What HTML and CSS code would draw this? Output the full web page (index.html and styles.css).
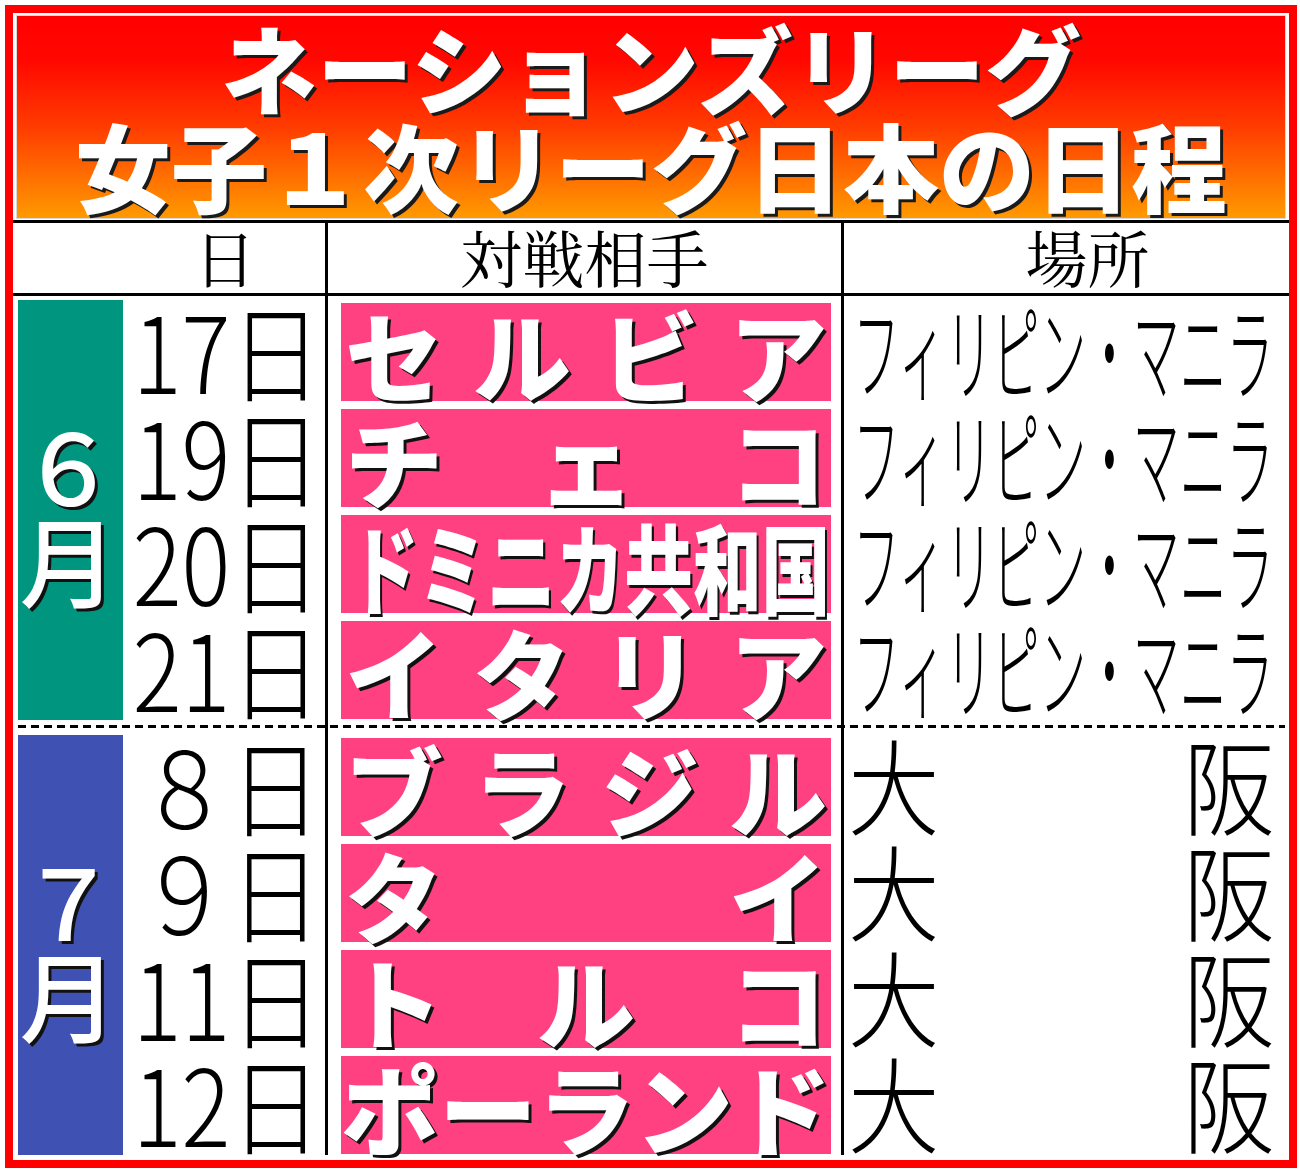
FILE: index.html
```html
<!DOCTYPE html>
<html lang="ja">
<head>
<meta charset="utf-8">
<title>ネーションズリーグ 女子１次リーグ日本の日程</title>
<link rel="stylesheet" href="styles.css">
</head>
<body>
<div class="frame">
  <div class="title">
    <div class="title-line">ネーションズリーグ</div>
    <div class="title-line">女子１次リーグ日本の日程</div>
  </div>
  <div class="table">
    <div class="vlines"></div>
    <div class="th th-day">日</div>
    <div class="th th-opp">対戦相手</div>
    <div class="th th-venue">場所</div>

    <div class="month month-jun"><span>６</span><span>月</span></div>

    <div class="row r2">
      <div class="date"><span class="tall">17日</span></div>
      <div class="opp"><div class="box"><span>セ</span><span>ル</span><span>ビ</span><span>ア</span></div></div>
      <div class="venue"><span class="condensed">フィリピン・マニラ</span></div>
    </div>
    <div class="row r3">
      <div class="date"><span class="tall">19日</span></div>
      <div class="opp"><div class="box"><span>チ</span><span>ェ</span><span>コ</span></div></div>
      <div class="venue"><span class="condensed">フィリピン・マニラ</span></div>
    </div>
    <div class="row r4">
      <div class="date"><span class="tall">20日</span></div>
      <div class="opp"><div class="box box-center"><span class="squeeze">ドミニカ共和国</span></div></div>
      <div class="venue"><span class="condensed">フィリピン・マニラ</span></div>
    </div>
    <div class="row r5">
      <div class="date"><span class="tall">21日</span></div>
      <div class="opp"><div class="box"><span>イ</span><span>タ</span><span>リ</span><span>ア</span></div></div>
      <div class="venue"><span class="condensed">フィリピン・マニラ</span></div>
    </div>

    <div class="divider"><div class="dash"></div></div>

    <div class="month month-jul"><span>７</span><span>月</span></div>

    <div class="row r7">
      <div class="date"><span class="tall">８日</span></div>
      <div class="opp"><div class="box"><span>ブ</span><span>ラ</span><span>ジ</span><span>ル</span></div></div>
      <div class="venue venue-split"><span class="tall-l">大</span><span class="tall-r">阪</span></div>
    </div>
    <div class="row r8">
      <div class="date"><span class="tall">９日</span></div>
      <div class="opp"><div class="box"><span>タ</span><span>イ</span></div></div>
      <div class="venue venue-split"><span class="tall-l">大</span><span class="tall-r">阪</span></div>
    </div>
    <div class="row r9">
      <div class="date"><span class="tall">11日</span></div>
      <div class="opp"><div class="box"><span>ト</span><span>ル</span><span>コ</span></div></div>
      <div class="venue venue-split"><span class="tall-l">大</span><span class="tall-r">阪</span></div>
    </div>
    <div class="row r10">
      <div class="date"><span class="tall">12日</span></div>
      <div class="opp"><div class="box box-tight"><span>ポ</span><span>ー</span><span>ラ</span><span>ン</span><span>ド</span></div></div>
      <div class="venue venue-split"><span class="tall-l">大</span><span class="tall-r">阪</span></div>
    </div>
  </div>
</div>
</body>
</html>
```
FILE: styles.css
```css
* { box-sizing: border-box; }

html, body {
  margin: 0;
  padding: 0;
  background: #ffffff;
}

body {
  font-family: "Noto Sans CJK JP", "Noto Sans", sans-serif;
  color: #000;
  overflow: hidden;
}

.frame {
  margin: 5px;
  width: 1292px;
  height: 1163px;
  border: 8px solid #ff0000;
  padding: 2px 0 0 0;
  background: #fff;
}

.title {
  margin: 0 3px;
  height: 204px;
  border: 1px solid #d9d9d9;
  background: linear-gradient(to bottom, #ff0000 0%, #ff0800 22%, #ff3c00 55%, #ff7000 80%, #ff9a00 100%);
  padding-top: 1px;
  text-align: center;
}

.title-line {
  font-family: "Noto Sans CJK JP", sans-serif;
  font-weight: 900;
  font-size: 96px;
  line-height: 98px;
  color: #fff;
  white-space: nowrap;
  text-shadow: 3px 3px 0 #1a1a1a;
}

.table {
  margin-top: 1px;
  border-top: 3px solid #000;
  display: grid;
  grid-template-columns: 110px 202px 519px 445px;
  grid-template-rows: 73px repeat(4, 106px) 11px repeat(4, 106px);
}

.row { display: contents; }
.r2 > * { grid-row: 2; }
.r3 > * { grid-row: 3; }
.r4 > * { grid-row: 4; }
.r5 > * { grid-row: 5; }
.r7 > * { grid-row: 7; }
.r8 > * { grid-row: 8; }
.r9 > * { grid-row: 9; }
.r10 > * { grid-row: 10; }

.vlines {
  grid-column: 3;
  grid-row: 1 / -1;
  border-left: 3px solid #000;
  border-right: 3px solid #000;
}

.th {
  grid-row: 1;
  border-bottom: 3px solid #000;
  display: flex;
  align-items: center;
  justify-content: center;
  font-family: "Noto Serif CJK JP", "Noto Sans CJK JP", serif;
  font-weight: 400;
  font-size: 62px;
  line-height: 1;
  padding-bottom: 2px;
}

.th-day {
  grid-column: 1 / span 2;
  padding-left: 112px;
}

.th-opp {
  grid-column: 3;
}

.th-venue {
  grid-column: 4;
  padding-left: 42px;
}

.month {
  grid-column: 1;
  margin: 4px 0 0 5px;
  display: flex;
  flex-direction: column;
  align-items: center;
  justify-content: center;
  color: #fff;
  font-size: 98px;
  line-height: 94px;
  font-weight: 500;
  text-shadow: 3px 3px 0 #111;
  padding-right: 4px;
}

.month-jun {
  grid-row: 2 / span 4;
  background: #00957f;
}

.month-jul {
  grid-row: 7 / span 4;
  background: #3f52b4;
}

.date {
  grid-column: 2;
  display: flex;
  align-items: center;
  justify-content: flex-end;
  padding-right: 4px;
  padding-bottom: 2px;
  font-size: 106px;
  font-weight: 300;
  line-height: 1;
  white-space: nowrap;
}

.tall {
  display: inline-block;
  flex-shrink: 0;
  transform: scaleX(0.86);
  transform-origin: right center;
}

.opp {
  grid-column: 3;
  padding: 7px 13px 1px 16px;
}

.box {
  height: 98px;
  background: #ff4181;
  display: flex;
  align-items: center;
  justify-content: space-between;
  padding: 0 4px;
  color: #fff;
  font-weight: 900;
  font-size: 98px;
  line-height: 98px;
  text-shadow: 3px 3px 0 #111;
  white-space: nowrap;
}

.box-tight {
  padding: 0;
}

.box-center {
  justify-content: center;
}

.squeeze {
  display: inline-block;
  flex-shrink: 0;
  transform: scaleX(0.70);
  transform-origin: center center;
  margin-left: 8px;
}

.venue {
  grid-column: 4;
  min-width: 0;
  display: flex;
  align-items: center;
  padding-left: 9px;
  padding-bottom: 2px;
  font-size: 104px;
  font-weight: 300;
  line-height: 1;
  white-space: nowrap;
}

.condensed {
  display: inline-block;
  flex-shrink: 0;
  transform: scaleX(0.45);
  transform-origin: left center;
}

.venue-split {
  justify-content: space-between;
  padding-left: 4px;
  padding-right: 14px;
}

.tall-l, .tall-r {
  display: inline-block;
  transform: scaleX(0.88);
}

.tall-l { transform-origin: left center; }
.tall-r { transform-origin: right center; }

.divider {
  grid-column: 1 / -1;
  grid-row: 6;
  padding: 5px 4px 0 5px;
}

.dash {
  height: 3px;
  background: repeating-linear-gradient(to right, #000 0, #000 8px, transparent 8px, transparent 13px);
}
```
